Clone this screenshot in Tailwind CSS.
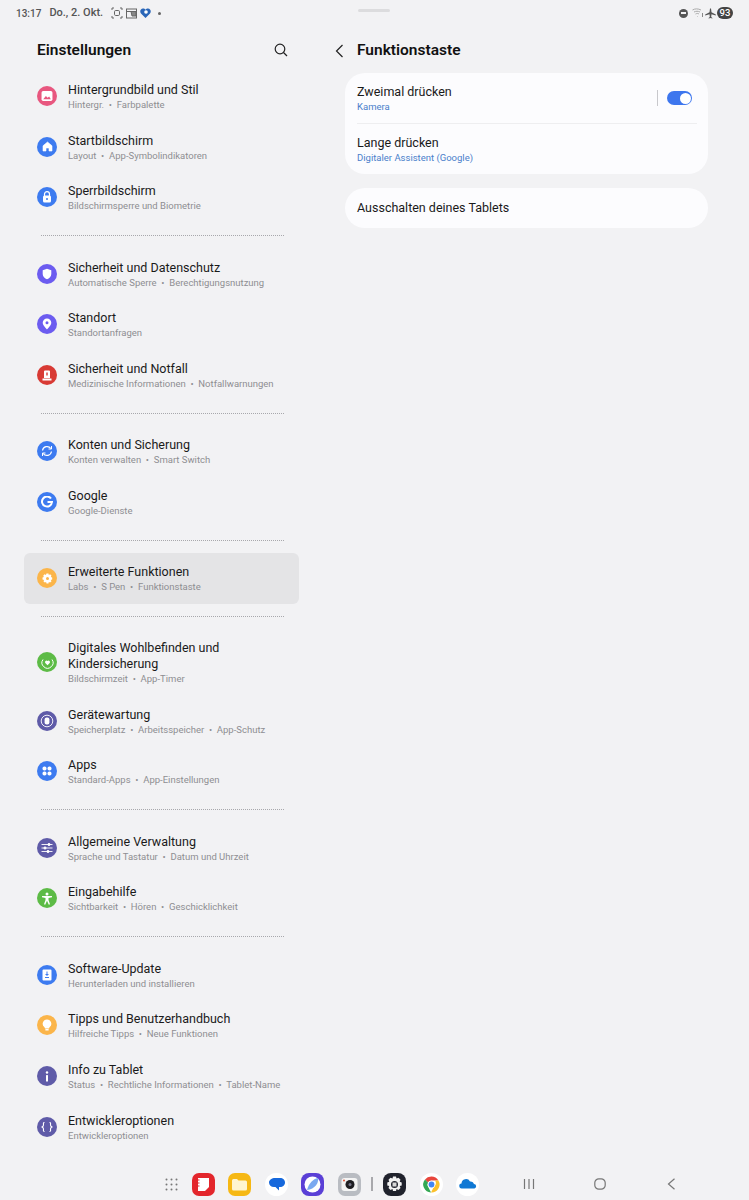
<!DOCTYPE html>
<html lang="en">
<head>
  <meta charset="UTF-8" />
  <title>Funktionstaste</title>
  <script src="https://cdn.jsdelivr.net/npm/@tailwindcss/browser@4"></script>
</head>
<body class="bg-[#f2f2f4] font-['Roboto',sans-serif] text-[#1a1a1a]">
<div class="relative w-[749px] h-[1200px] overflow-hidden flex flex-col">

  <!-- Status bar -->
  <div class="h-[26px] shrink-0 flex items-center pl-[16px] pr-[16px] text-[11px] text-[#555] font-medium">
    <span class="text-[10px]">13:17</span>
    <span class="ml-[8px]">Do., 2. Okt.</span>
    <svg class="ml-[8px]" width="12" height="12" viewBox="0 0 12 12" fill="none" stroke="#666" stroke-width="1"><path d="M1 3V1h2M9 1h2v2M11 9v2H9M3 11H1V9"/><rect x="3.5" y="3.5" width="5" height="5" rx="1.2"/></svg>
    <svg class="ml-[3px]" width="11" height="11" viewBox="0 0 11 11" fill="none" stroke="#666" stroke-width="1"><rect x="0.5" y="1" width="10" height="9"/><path d="M.5 3.5h10M5 3.5H10V8H6z" fill="#888"/></svg>
    <svg class="ml-[3px]" width="11" height="10" viewBox="0 0 11 10"><path d="M5.500 10 L1 5.500C-.6 3.500.5 .5 3 .5c1.100 0 2 .5 2.500 1.200C6 1 7 .5 8 .5c2.500 0 3.600 3 2 5z" fill="#2a66b8"/><circle cx="6" cy="4" r="1.800" fill="#fff"/></svg>
    <span class="ml-[7px] w-[3px] h-[3px] rounded-full bg-[#666]"></span>
    <div class="ml-auto flex items-center">
      <span class="w-[9px] h-[9px] rounded-full bg-[#555] flex items-center justify-center"><span class="w-[5px] h-[1.500px] bg-[#f2f2f4]"></span></span>
      <svg class="ml-[4px]" width="12" height="10" viewBox="0 0 12 10" fill="none" stroke="#aaa" stroke-width="1"><path d="M.5 2C3 .5 6 .5 9 2M2 4c2-1 4-1 6 0M3.500 6C5 5.300 6 5.300 7 6M5 8l.5.5"/><path d="M10.500 5v4" stroke="#888"/></svg>
      <svg class="ml-[1px]" width="11" height="11" viewBox="0 0 11 11"><path d="M5 0.500h1l.5 3.800 4.300 2.200v1L6.500 6.300 6.200 9l1.200 1v.6l-1.900-.5-1.900.5V10l1.200-1-.3-2.700L.2 7.500v-1l4.300-2.200z" fill="#555"/></svg>
      <span class="ml-[1px] w-[16px] h-[12px] rounded-[6px] bg-[#444] text-white text-[9.500px] leading-[12px] text-center">93</span>
    </div>
  </div>
  <div class="absolute left-[358px] top-[9px] w-[32px] h-[3px] rounded-full bg-[#dcdcde]"></div>

  <!-- Panels -->
  <div class="flex-1 flex">
    <!-- Settings list -->
    <div class="w-[345px] shrink-0 pl-[24px] pr-[46px]">
      <div class="h-[44.5px] pl-[13px] flex items-center pt-[4px]">
        <h1 class="text-[15.500px] font-semibold text-[#111]">Einstellungen</h1>
        <svg class="ml-[143px]" width="14" height="14" viewBox="0 0 14 14" fill="none" stroke="#222" stroke-width="1.200"><circle cx="6" cy="6" r="4.800"/><path d="M9.500 9.500 13 13"/></svg>
      </div>

      <!-- Group 1 -->
      <div class="h-[50.800px] flex items-center pl-[13px]">
        <span class="w-[20px] h-[20px] rounded-full bg-[#e8577f] flex items-center justify-center shrink-0">
          <svg width="12" height="12" viewBox="0 0 11 11"><rect x=".5" y="1" width="10" height="9" rx="1.500" fill="#fff"/><path d="M2 8.500 4.500 5.500 6 7l1.500-1L9 8.500z" fill="#e8577f"/></svg>
        </span>
        <div class="ml-[11px]"><p class="text-[12.500px] leading-[17px]">Hintergrundbild und Stil</p><p class="text-[9.500px] leading-[13px] text-[#8e8e92]">Hintergr. &nbsp;•&nbsp; Farbpalette</p></div>
      </div>
      <div class="h-[50.800px] flex items-center pl-[13px]">
        <span class="w-[20px] h-[20px] rounded-full bg-[#3d7bf0] flex items-center justify-center shrink-0">
          <svg width="11" height="11" viewBox="0 0 11 11"><path d="M5.500 1 10 4.800V10H7V7H4v3H1V4.800z" fill="#fff" stroke="#fff" stroke-linejoin="round" stroke-width=".6"/></svg>
        </span>
        <div class="ml-[11px]"><p class="text-[12.500px] leading-[17px]">Startbildschirm</p><p class="text-[9.500px] leading-[13px] text-[#8e8e92]">Layout &nbsp;•&nbsp; App-Symbolindikatoren</p></div>
      </div>
      <div class="h-[50.800px] flex items-center pl-[13px]">
        <span class="w-[20px] h-[20px] rounded-full bg-[#3d7bf0] flex items-center justify-center shrink-0">
          <svg width="10" height="12" viewBox="0 0 10 12"><path d="M2.500 5V3.200a2.500 2.500 0 0 1 5 0V5" fill="none" stroke="#fff" stroke-width="1.200"/><rect x="1" y="4.500" width="8" height="7" rx="1.500" fill="#fff"/><circle cx="5" cy="8" r="1" fill="#3d7bf0"/></svg>
        </span>
        <div class="ml-[11px]"><p class="text-[12.500px] leading-[17px]">Sperrbildschirm</p><p class="text-[9.500px] leading-[13px] text-[#8e8e92]">Bildschirmsperre und Biometrie</p></div>
      </div>
      <div class="h-[25.400px] flex items-center pl-[17px] pr-[15px]"><div class="w-full border-t border-dotted border-[#a8a8ac]"></div></div>

      <!-- Group 2 -->
      <div class="h-[50.800px] flex items-center pl-[13px]">
        <span class="w-[20px] h-[20px] rounded-full bg-[#6c5cf0] flex items-center justify-center shrink-0">
          <svg width="10" height="12" viewBox="0 0 10 12"><path d="M5 .8 9.300 2.300V6c0 2.700-2 4.400-4.300 5.300C2.700 10.400.7 8.700.7 6V2.300z" fill="#fff"/></svg>
        </span>
        <div class="ml-[11px]"><p class="text-[12.500px] leading-[17px]">Sicherheit und Datenschutz</p><p class="text-[9.500px] leading-[13px] text-[#8e8e92]">Automatische Sperre &nbsp;•&nbsp; Berechtigungsnutzung</p></div>
      </div>
      <div class="h-[50.800px] flex items-center pl-[13px]">
        <span class="w-[20px] h-[20px] rounded-full bg-[#6c5cf0] flex items-center justify-center shrink-0">
          <svg width="10" height="12" viewBox="0 0 10 12"><path fill-rule="evenodd" d="M5 .5a4.300 4.300 0 0 1 4.300 4.300C9.300 7.500 5 11.500 5 11.500S.7 7.500.7 4.800A4.300 4.300 0 0 1 5 .5zm0 2.800a1.500 1.500 0 1 0 0 3 1.500 1.500 0 0 0 0-3z" fill="#fff"/></svg>
        </span>
        <div class="ml-[11px]"><p class="text-[12.500px] leading-[17px]">Standort</p><p class="text-[9.500px] leading-[13px] text-[#8e8e92]">Standortanfragen</p></div>
      </div>
      <div class="h-[50.800px] flex items-center pl-[13px]">
        <span class="w-[20px] h-[20px] rounded-full bg-[#d83a34] flex items-center justify-center shrink-0">
          <svg width="10" height="11" viewBox="0 0 10 11"><path fill-rule="evenodd" d="M3 .5h4a1 1 0 0 1 1 1V8H2V1.500a1 1 0 0 1 1-1zM4.300 2.500v3h1.400v-3z" fill="#fff"/><rect x=".5" y="8.500" width="9" height="2" fill="#fff"/></svg>
        </span>
        <div class="ml-[11px]"><p class="text-[12.500px] leading-[17px]">Sicherheit und Notfall</p><p class="text-[9.500px] leading-[13px] text-[#8e8e92]">Medizinische Informationen &nbsp;•&nbsp; Notfallwarnungen</p></div>
      </div>
      <div class="h-[25.400px] flex items-center pl-[17px] pr-[15px]"><div class="w-full border-t border-dotted border-[#a8a8ac]"></div></div>

      <!-- Group 3 -->
      <div class="h-[50.800px] flex items-center pl-[13px]">
        <span class="w-[20px] h-[20px] rounded-full bg-[#3d7bf0] flex items-center justify-center shrink-0">
          <svg width="12" height="12" viewBox="0 0 12 12" fill="none" stroke="#fff" stroke-width="1.200"><path d="M1.500 5.500A4.600 4.600 0 0 1 9.800 3.500"/><path d="M10.500 6.500A4.600 4.600 0 0 1 2.200 8.500"/><path d="M10.500 1v3H7.500M1.500 11V8h3" stroke-width="1"/></svg>
        </span>
        <div class="ml-[11px]"><p class="text-[12.500px] leading-[17px]">Konten und Sicherung</p><p class="text-[9.500px] leading-[13px] text-[#8e8e92]">Konten verwalten &nbsp;•&nbsp; Smart Switch</p></div>
      </div>
      <div class="h-[50.800px] flex items-center pl-[13px]">
        <span class="w-[20px] h-[20px] rounded-full bg-[#3d7bf0] flex items-center justify-center shrink-0">
          <svg width="12" height="12" viewBox="0 0 12 12" fill="none" stroke="#fff" stroke-width="2"><path d="M10 2.500A5 5 0 1 0 11 6H6.500"/></svg>
        </span>
        <div class="ml-[11px]"><p class="text-[12.500px] leading-[17px]">Google</p><p class="text-[9.500px] leading-[13px] text-[#8e8e92]">Google-Dienste</p></div>
      </div>
      <div class="h-[25.400px] flex items-center pl-[17px] pr-[15px]"><div class="w-full border-t border-dotted border-[#a8a8ac]"></div></div>

      <!-- Group 4 (selected) -->
      <div class="h-[50.800px] flex items-center pl-[13px] rounded-[6px] bg-[#e4e4e6]">
        <span class="w-[20px] h-[20px] rounded-full bg-[#fbb54a] flex items-center justify-center shrink-0">
          <svg width="11" height="11" viewBox="0 0 11 11"><path fill-rule="evenodd" d="M4.500 .5h2l.3 1.400 1.300-.6 1.400 1.400-.7 1.300 1.400.5v2l-1.400.4.700 1.300-1.400 1.400-1.300-.7-.3 1.600h-2l-.4-1.500-1.300.6-1.400-1.400.7-1.300L.5 6.500v-2l1.400-.5-.7-1.300 1.400-1.400 1.300.6zM5.500 4a1.500 1.500 0 1 0 0 3 1.500 1.500 0 0 0 0-3z" fill="#fff"/></svg>
        </span>
        <div class="ml-[11px]"><p class="text-[12.500px] leading-[17px]">Erweiterte Funktionen</p><p class="text-[9.500px] leading-[13px] text-[#8e8e92]">Labs &nbsp;•&nbsp; S Pen &nbsp;•&nbsp; Funktionstaste</p></div>
      </div>
      <div class="h-[25.400px] flex items-center pl-[17px] pr-[15px]"><div class="w-full border-t border-dotted border-[#a8a8ac]"></div></div>

      <!-- Group 5 -->
      <div class="h-[66px] flex items-center pl-[13px]">
        <span class="w-[20px] h-[20px] rounded-full bg-[#5dbb46] flex items-center justify-center shrink-0">
          <svg width="13" height="13" viewBox="0 0 13 13" fill="none" stroke="#fff" stroke-width="1"><path d="M2 3.500A5.500 5.500 0 1 0 11 3.500"/><path d="M6.500 9.200 4.300 7a1.500 1.500 0 0 1 2.200-2 1.500 1.500 0 0 1 2.200 2z" fill="#fff" stroke="none"/></svg>
        </span>
        <div class="ml-[11px]"><p class="text-[12.500px] leading-[16px]">Digitales Wohlbefinden und<br>Kindersicherung</p><p class="text-[9.500px] leading-[13px] text-[#8e8e92]">Bildschirmzeit &nbsp;•&nbsp; App-Timer</p></div>
      </div>
      <div class="h-[50.800px] flex items-center pl-[13px]">
        <span class="w-[20px] h-[20px] rounded-full bg-[#5f5ba8] flex items-center justify-center shrink-0">
          <svg width="14" height="14" viewBox="0 0 14 14" fill="none" stroke="#fff"><circle cx="7" cy="7" r="5.800" stroke-width=".9"/><rect x="4.600" y="3.500" width="4.800" height="7" rx="2" fill="#fff" stroke="none"/></svg>
        </span>
        <div class="ml-[11px]"><p class="text-[12.500px] leading-[17px]">Gerätewartung</p><p class="text-[9.500px] leading-[13px] text-[#8e8e92]">Speicherplatz &nbsp;•&nbsp; Arbeitsspeicher &nbsp;•&nbsp; App-Schutz</p></div>
      </div>
      <div class="h-[50.800px] flex items-center pl-[13px]">
        <span class="w-[20px] h-[20px] rounded-full bg-[#3d7bf0] flex items-center justify-center shrink-0">
          <svg width="10" height="10" viewBox="0 0 10 10" fill="#fff"><rect x=".5" y=".5" width="4" height="4" rx="1.800"/><rect x="5.500" y=".5" width="4" height="4" rx="1.800"/><rect x=".5" y="5.500" width="4" height="4" rx="1.800"/><rect x="5.500" y="5.500" width="4" height="4" rx="1.800"/></svg>
        </span>
        <div class="ml-[11px]"><p class="text-[12.500px] leading-[17px]">Apps</p><p class="text-[9.500px] leading-[13px] text-[#8e8e92]">Standard-Apps &nbsp;•&nbsp; App-Einstellungen</p></div>
      </div>
      <div class="h-[25.400px] flex items-center pl-[17px] pr-[15px]"><div class="w-full border-t border-dotted border-[#a8a8ac]"></div></div>

      <!-- Group 6 -->
      <div class="h-[50.800px] flex items-center pl-[13px]">
        <span class="w-[20px] h-[20px] rounded-full bg-[#5f5ba8] flex items-center justify-center shrink-0">
          <svg width="12" height="10" viewBox="0 0 12 10" fill="none" stroke="#fff"><path d="M.5 1.500h11M.5 5h11M.5 8.500h11" stroke-width=".9"/><circle cx="8" cy="1.500" r="1.100" fill="#fff"/><circle cx="4" cy="5" r="1.100" fill="#fff"/><circle cx="7" cy="8.500" r="1.100" fill="#fff"/></svg>
        </span>
        <div class="ml-[11px]"><p class="text-[12.500px] leading-[17px]">Allgemeine Verwaltung</p><p class="text-[9.500px] leading-[13px] text-[#8e8e92]">Sprache und Tastatur &nbsp;•&nbsp; Datum und Uhrzeit</p></div>
      </div>
      <div class="h-[50.800px] flex items-center pl-[13px]">
        <span class="w-[20px] h-[20px] rounded-full bg-[#5dbb46] flex items-center justify-center shrink-0">
          <svg width="12" height="13" viewBox="0 0 12 13" fill="#fff"><circle cx="6" cy="2" r="1.500"/><path d="M1 4h10v1.300L7.500 6v2l1.500 4.300-1.200.4L6 8.800l-1.800 3.900L3 12.300 4.500 8V6L1 5.300z"/></svg>
        </span>
        <div class="ml-[11px]"><p class="text-[12.500px] leading-[17px]">Eingabehilfe</p><p class="text-[9.500px] leading-[13px] text-[#8e8e92]">Sichtbarkeit &nbsp;•&nbsp; Hören &nbsp;•&nbsp; Geschicklichkeit</p></div>
      </div>
      <div class="h-[25.400px] flex items-center pl-[17px] pr-[15px]"><div class="w-full border-t border-dotted border-[#a8a8ac]"></div></div>

      <!-- Group 7 -->
      <div class="h-[50.800px] flex items-center pl-[13px]">
        <span class="w-[20px] h-[20px] rounded-full bg-[#3d7bf0] flex items-center justify-center shrink-0">
          <svg width="10" height="12" viewBox="0 0 10 12"><path fill-rule="evenodd" d="M1.500.5h7a1 1 0 0 1 1 1v9a1 1 0 0 1-1 1h-7a1 1 0 0 1-1-1v-9a1 1 0 0 1 1-1zM4.500 2.500V5H3l2 2 2-2H5.500V2.500zM3 8v1h4V8z" fill="#fff"/></svg>
        </span>
        <div class="ml-[11px]"><p class="text-[12.500px] leading-[17px]">Software-Update</p><p class="text-[9.500px] leading-[13px] text-[#8e8e92]">Herunterladen und installieren</p></div>
      </div>
      <div class="h-[50.800px] flex items-center pl-[13px]">
        <span class="w-[20px] h-[20px] rounded-full bg-[#fbb54a] flex items-center justify-center shrink-0">
          <svg width="10" height="12" viewBox="0 0 10 12" fill="#fff"><path d="M5 .5a4.300 4.300 0 0 1 2.500 7.800L7 9.500H3l-.5-1.200A4.300 4.300 0 0 1 5 .5z"/><rect x="3.300" y="10" width="3.400" height="1.500" rx=".6"/></svg>
        </span>
        <div class="ml-[11px]"><p class="text-[12.500px] leading-[17px]">Tipps und Benutzerhandbuch</p><p class="text-[9.500px] leading-[13px] text-[#8e8e92]">Hilfreiche Tipps &nbsp;•&nbsp; Neue Funktionen</p></div>
      </div>
      <div class="h-[50.800px] flex items-center pl-[13px]">
        <span class="w-[20px] h-[20px] rounded-full bg-[#5f5ba8] flex items-center justify-center shrink-0">
          <svg width="4" height="11" viewBox="0 0 4 11" fill="#fff"><circle cx="2" cy="1.500" r="1.200"/><rect x="1" y="4" width="2" height="6.500" rx=".5"/></svg>
        </span>
        <div class="ml-[11px]"><p class="text-[12.500px] leading-[17px]">Info zu Tablet</p><p class="text-[9.500px] leading-[13px] text-[#8e8e92]">Status &nbsp;•&nbsp; Rechtliche Informationen &nbsp;•&nbsp; Tablet-Name</p></div>
      </div>
      <div class="h-[50.800px] flex items-center pl-[13px]">
        <span class="w-[20px] h-[20px] rounded-full bg-[#5f5ba8] flex items-center justify-center shrink-0">
          <svg width="12" height="10" viewBox="0 0 12 10" fill="none" stroke="#fff" stroke-width="1.100"><path d="M3.500.5C2 .5 2.500 2 2.500 3S2 4.500 1 5c1 .5 1.500 1 1.500 2S2 9.500 3.500 9.500M8.500.5C10 .5 9.500 2 9.500 3S10 4.500 11 5c-1 .5-1.500 1-1.500 2S10 9.500 8.500 9.500"/></svg>
        </span>
        <div class="ml-[11px]"><p class="text-[12.500px] leading-[17px]">Entwickleroptionen</p><p class="text-[9.500px] leading-[13px] text-[#8e8e92]">Entwickleroptionen</p></div>
      </div>
    </div>

    <!-- Detail panel -->
    <div class="w-[363px] shrink-0">
      <div class="h-[47px] flex items-center pt-[2px]">
        <svg class="ml-[-10px]" width="9" height="14" viewBox="0 0 9 14" fill="none" stroke="#222" stroke-width="1.200"><path d="M7.500 1 1.500 7l6 6"/></svg>
        <h2 class="ml-[13px] text-[15.500px] font-semibold text-[#111]">Funktionstaste</h2>
      </div>
      <div class="rounded-[20px] bg-[#fcfcfe] h-[101px] px-[12px] flex flex-col">
        <div class="h-[51px] flex items-center border-b border-[#eeeef0] mr-[-1px]">
          <div><p class="text-[12.500px] leading-[17px]">Zweimal drücken</p><p class="text-[9.500px] leading-[13px] text-[#4a7fcb]">Kamera</p></div>
          <span class="ml-auto w-px h-[16px] bg-[#c8c8cc]"></span>
          <span class="ml-[9px] mr-[5px] w-[25px] h-[14px] rounded-full bg-[#3d76ee] flex items-center justify-end pr-[1.500px]"><span class="w-[11px] h-[11px] rounded-full bg-white"></span></span>
        </div>
        <div class="flex-1 flex items-center">
          <div><p class="text-[12.500px] leading-[17px]">Lange drücken</p><p class="text-[9.500px] leading-[13px] text-[#4a7fcb]">Digitaler Assistent (Google)</p></div>
        </div>
      </div>
      <div class="mt-[14px] rounded-[20px] bg-[#fcfcfe] h-[40px] px-[12px] flex items-center pt-[1px]">
        <p class="text-[12.500px]">Ausschalten deines Tablets</p>
      </div>
    </div>
  </div>

  <!-- Dock and navigation -->
  <div class="h-[48px] shrink-0 flex items-center pt-[16px] pl-[157px]">
    <span class="w-[28px] flex justify-center">
      <svg width="13" height="13" viewBox="0 0 13 13" fill="#777"><circle cx="1.500" cy="1.500" r="1"/><circle cx="6.500" cy="1.500" r="1"/><circle cx="11.500" cy="1.500" r="1"/><circle cx="1.500" cy="6.500" r="1"/><circle cx="6.500" cy="6.500" r="1"/><circle cx="11.500" cy="6.500" r="1"/><circle cx="1.500" cy="11.500" r="1"/><circle cx="6.500" cy="11.500" r="1"/><circle cx="11.500" cy="11.500" r="1"/></svg>
    </span>
    <span class="w-[36.500px] flex justify-center">
      <svg width="23" height="23" viewBox="0 0 23 23"><rect width="23" height="23" rx="7" fill="#e3262c"/><path d="M6 5h11v9l-4 4H6z" fill="#fff"/><path d="M4.500 7h3M4.500 10h3M4.500 13h3" stroke="#e3262c" stroke-width="1"/></svg>
    </span>
    <span class="w-[36.500px] flex justify-center">
      <svg width="23" height="23" viewBox="0 0 23 23"><rect width="23" height="23" rx="7" fill="#f6b814"/><path d="M4 7.500a1.500 1.500 0 0 1 1.500-1.500H9l1.500 1.500h7A1.500 1.500 0 0 1 19 9v7a1.500 1.500 0 0 1-1.500 1.500h-12A1.500 1.500 0 0 1 4 16z" fill="#fff5cf"/></svg>
    </span>
    <span class="w-[36.500px] flex justify-center">
      <svg width="23" height="23" viewBox="0 0 23 23"><circle cx="11.500" cy="11.500" r="11.500" fill="#fff"/><path d="M10 5h5c3 0 5 2 5 4.500S18 14 15 14h-1v3.500l-3.500-3.500H9c-3 0-5-2-5-4.500S7 5 10 5z" fill="#1668dc"/></svg>
    </span>
    <span class="w-[36.500px] flex justify-center">
      <svg width="23" height="23" viewBox="0 0 23 23"><rect width="23" height="23" rx="8" fill="#5a3fd6"/><circle cx="11.500" cy="11.500" r="8" fill="#fff"/><path d="M6 17C8 10 12 6 17 5c1 5-3 11-11 12z" fill="#7aa8f0"/></svg>
    </span>
    <span class="w-[36.500px] flex justify-center">
      <svg width="23" height="23" viewBox="0 0 23 23"><rect width="23" height="23" rx="7" fill="#b9bcc2"/><rect x="3.500" y="5" width="16" height="13" rx="3" fill="#f4f4f4"/><circle cx="12" cy="11.500" r="4.500" fill="#1e1e22"/><circle cx="12" cy="11.500" r="1.500" fill="#778"/><circle cx="6" cy="7.500" r="1" fill="#e0533a"/></svg>
    </span>
    <span class="w-[9px] flex justify-center"><span class="w-[1.500px] h-[14px] bg-[#a8a8ac]"></span></span>
    <span class="w-[36.500px] flex justify-center">
      <svg width="23" height="23" viewBox="0 0 23 23"><rect width="23" height="23" rx="8" fill="#20222c"/><path fill-rule="evenodd" d="M10 3.500h3l.5 2 2-.8 2 2-.8 2 2 .7v3l-2 .5.800 2-2 2-2-.8-.5 2h-3l-.5-2-2 .8-2-2 .8-2-2-.5v-3l2-.7-.8-2 2-2 2 .8zM11.500 8a3.500 3.500 0 1 0 0 7 3.500 3.500 0 0 0 0-7z" fill="#f2f2f2"/><rect x="9.500" y="9.500" width="4" height="4" fill="#d8d8d8"/></svg>
    </span>
    <span class="w-[36.500px] flex justify-center">
      <svg width="23" height="23" viewBox="0 0 23 23"><circle cx="11.500" cy="11.500" r="11.500" fill="#fff"/><path d="M11.500 3.500A8 8 0 0 1 18.400 7.500H11.500A4 4 0 0 0 8 9.500L5 6.500a8 8 0 0 1 6.500-3z" fill="#e8453c"/><path d="M5 6.500 8 9.500a4 4 0 0 0 .000 4L11 19.500A8 8 0 0 1 5 6.500z" fill="#34a853"/><path d="M18.400 7.500A8 8 0 0 1 11 19.500l3-6a4 4 0 0 0 1-6z" fill="#fbc02d"/><circle cx="11.500" cy="11.500" r="3.700" fill="#fff"/><circle cx="11.500" cy="11.500" r="2.900" fill="#4285f4"/></svg>
    </span>
    <span class="w-[36.500px] flex justify-center">
      <svg width="23" height="23" viewBox="0 0 23 23"><circle cx="11.500" cy="11.500" r="11.500" fill="#fff"/><path d="M8 15.500H6a2.500 2.500 0 0 1-.5-5 4.500 4.500 0 0 1 8.500-2 3.500 3.500 0 0 1 4 2.500 2.300 2.300 0 0 1 .5 4.500z" fill="#0f78d4"/></svg>
    </span>
    <!-- nav buttons -->
    <svg class="ml-[37px]" width="12" height="12" viewBox="0 0 12 12" stroke="#777" stroke-width="1.200"><path d="M1.500 1v10M6 1v10M10.500 1v10"/></svg>
    <svg class="ml-[59px]" width="12" height="12" viewBox="0 0 12 12" fill="none" stroke="#777" stroke-width="1.200"><rect x=".8" y=".8" width="10.400" height="10.400" rx="4"/></svg>
    <svg class="ml-[61px]" width="9" height="12" viewBox="0 0 9 12" fill="none" stroke="#777" stroke-width="1.200"><path d="M7.500.8 1.500 6l6 5.200"/></svg>
  </div>
</div>
</body>
</html>
